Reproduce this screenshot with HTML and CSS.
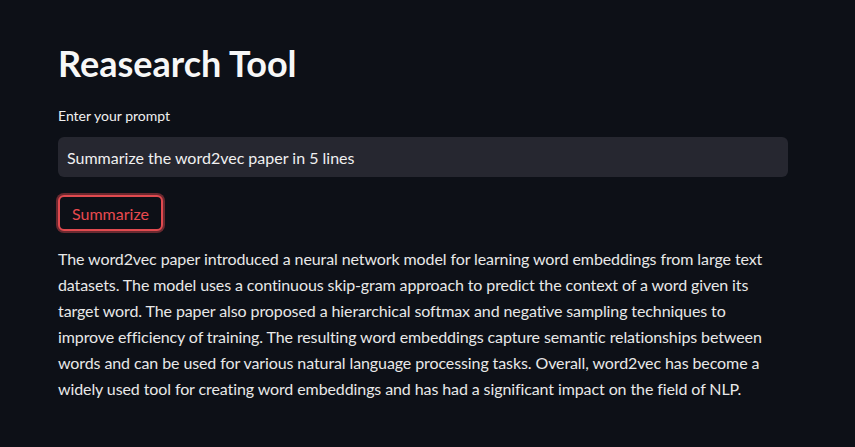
FILE: index.html
```html
<!DOCTYPE html>
<html>
<head>
<meta charset="utf-8">
<link rel="stylesheet" href="styles.css">
</head>
<body>
<main class="main">
  <h1 class="title">Reasearch Tool</h1>
  <label class="label" for="prompt">Enter your prompt</label>
  <div class="input-wrap">
    <input id="prompt" class="input" type="text" value="Summarize the word2vec paper in 5 lines">
  </div>
  <button class="btn">Summarize</button>
  <p class="answer">The word2vec paper introduced a neural network model for learning word embeddings from large text datasets. The model uses a continuous skip-gram approach to predict the context of a word given its target word. The paper also proposed a hierarchical softmax and negative sampling techniques to improve efficiency of training. The resulting word embeddings capture semantic relationships between words and can be used for various natural language processing tasks. Overall, word2vec has become a widely used tool for creating word embeddings and has had a significant impact on the field of NLP.</p>
</main>
</body>
</html>
```

FILE: styles.css
```css
html, body {
  margin: 0;
  padding: 0;
  background: #0d1017;
  height: 100%;
}
body {
  font-family: Lato, "Source Sans Pro", sans-serif;
  color: #f0f0f0;
}
.main {
  padding: 37px 67px 0 58px;
  display: flex;
  flex-direction: column;
  align-items: flex-start;
}
.title {
  margin: 0;
  font-size: 36px;
  font-weight: 700;
  line-height: 52px;
  color: #f7f7f7;
}
.label {
  margin-top: 17px;
  font-size: 14px;
  line-height: 20px;
  color: #f0f0f0;
}
.input-wrap {
  margin-top: 11px;
  align-self: stretch;
}
.input {
  box-sizing: border-box;
  width: 100%;
  height: 40px;
  border: none;
  border-radius: 6px;
  background: #262730;
  color: #f0f0f0;
  font-family: inherit;
  font-size: 16px;
  padding: 0 9px;
  outline: none;
}
.btn {
  margin-top: 18px;
  height: 36px;
  padding: 0 12px;
  border: 2px solid #e04a4f;
  border-radius: 6px;
  box-shadow: 0 0 0 2px rgba(224, 74, 79, 0.45);
  background: #0d1017;
  color: #e84a4f;
  font-family: inherit;
  font-size: 16px;
}
.answer {
  margin: 15px 0 0 0;
  max-width: 720px;
  font-size: 16px;
  line-height: 26px;
  letter-spacing: -0.1px;
  color: #e8e8e8;
}
```
